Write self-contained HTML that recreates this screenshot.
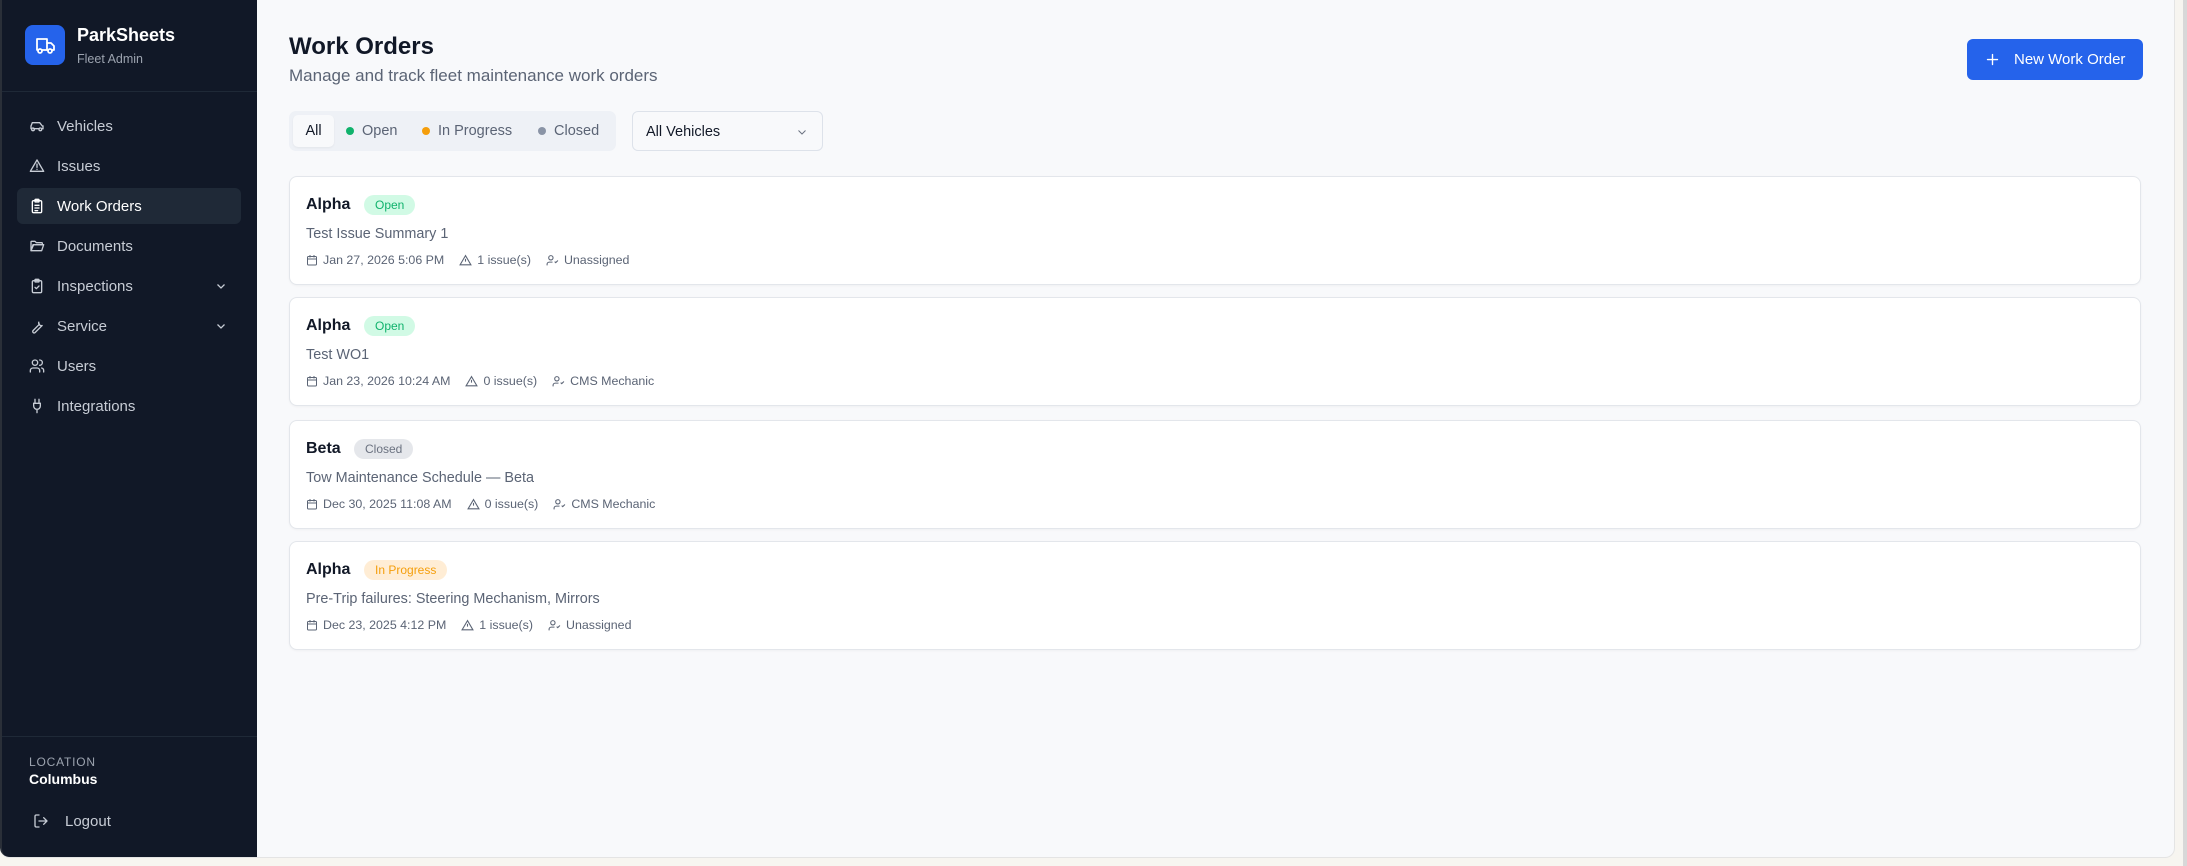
<!DOCTYPE html>
<html><head><meta charset="utf-8"><style>
*{box-sizing:border-box;margin:0;padding:0}
html,body{width:2187px;height:866px;overflow:hidden;background:#f7f5f0;font-family:"Liberation Sans",sans-serif}
.win{position:absolute;left:0;top:0;width:2175px;height:858px;background:#f8f9fb;border-radius:0 0 10px 10px;overflow:hidden;border-right:1px solid #e4e4e4;border-bottom:1px solid #e4e4e4}
.edge{position:absolute;left:2183px;top:0;width:4px;height:866px;background:#d8d8d8}
.side{position:absolute;left:0;top:0;width:257px;height:858px;background:#111827;border-left:2px solid #2a2f38;border-radius:0 0 0 10px;overflow:hidden}
.logo{position:absolute;left:23px;top:25px;width:40px;height:40px;background:#2563eb;border-radius:8px}
.brand{position:absolute;left:75px;top:25px;color:#fff;font-size:18px;font-weight:bold}
.sub{position:absolute;left:75px;top:52px;color:#9ca3af;font-size:12.5px}
.hdiv{position:absolute;left:0;top:91px;width:100%;height:1px;background:#1f2937}
.nav{position:absolute;left:15px;width:224px;height:36px;border-radius:6px;color:#c7ccd5;font-size:15px}
.nav.act{background:#1f2937;color:#fff}
.nav svg{position:absolute;left:12px;top:10px}
.nav span{position:absolute;left:40px;top:10px}
.nav .chev{left:auto;right:14px;top:12px}
.bdiv{position:absolute;left:0;top:736px;width:100%;height:1px;background:#1f2937}
.main{position:absolute;left:257px;top:0;right:0;bottom:0}
h1{position:absolute;left:32px;top:33px;font-size:24px;font-weight:bold;color:#111827}
.subt{position:absolute;left:32px;top:66px;font-size:17px;color:#5b6475}
.btn{position:absolute;left:1710px;top:39px;width:176px;height:41px;background:#2563eb;border-radius:6px;color:#fff;font-size:15px}
.btn span{position:absolute;left:47px;top:12px}
.tabs{position:absolute;left:32px;top:111px;width:327px;height:40px;background:#eef1f6;border-radius:7px;font-size:14.5px;color:#5b6475}
.tabs .all{position:absolute;left:4px;top:4px;width:41px;height:32px;background:#f8f9fb;border-radius:5px;color:#111827;text-align:center;line-height:32px;box-shadow:0 1px 2px rgba(0,0,0,.05)}
.tabs .t{position:absolute;top:12px}
.dot{position:absolute;top:16px;width:8px;height:8px;border-radius:50%}
.sel{position:absolute;left:375px;top:111px;width:191px;height:40px;border:1px solid #dde2ea;border-radius:6px;font-size:14.5px;color:#111827}
.sel span{position:absolute;left:13px;top:12px}
.card{position:absolute;left:32px;width:1852px;height:109px;background:#fff;border:1px solid #e3e6eb;border-radius:8px;box-shadow:0 1px 2px rgba(0,0,0,.04)}
.ct{position:absolute;left:16px;top:19px;font-size:16px;font-weight:bold;color:#111827}
.badge{position:absolute;top:18px;height:20px;border-radius:10px;font-size:12px;line-height:20px;padding:0 11px}
.open{background:#d1fae5;color:#10b26c}
.closed{background:#e5e7eb;color:#6b7280}
.prog{background:#ffedd5;color:#f59e0b}
.cs{position:absolute;left:16px;top:49px;font-size:14.4px;color:#5b6475}
.meta{position:absolute;left:16px;top:76px;display:flex;align-items:center;font-size:12.4px;color:#5b6475;white-space:nowrap}
.meta svg{margin-right:5px}
.meta .g{width:15px}
</style></head><body>
<div class="edge"></div>
<div class="win">
<div class="side">
 <div class="logo"><svg width="40" height="40" viewBox="0 0 40 40" fill="none" stroke="#fff" stroke-width="1.8" stroke-linecap="round" stroke-linejoin="round"><path d="M12 14h10v11H12z"/><path d="M22 18h4l3 3v4h-7"/><circle cx="15" cy="26" r="2" fill="#2563eb"/><circle cx="25" cy="26" r="2" fill="#2563eb"/></svg></div>
 <div class="brand">ParkSheets</div>
 <div class="sub">Fleet Admin</div>
 <div class="hdiv"></div>
 <div class="nav" style="top:108px"><svg width="16" height="16" viewBox="0 0 24 24" fill="none" stroke="currentColor" stroke-width="2" stroke-linecap="round"><path d="M3 16V12l2-5h11l4 5h1v4h-2M7 16h8"/><circle cx="6" cy="17" r="2"/><circle cx="17" cy="17" r="2"/></svg><span>Vehicles</span></div>
 <div class="nav" style="top:148px"><svg width="16" height="16" viewBox="0 0 24 24" fill="none" stroke="currentColor" stroke-width="2" stroke-linecap="round" stroke-linejoin="round"><path d="M12 3 2 20h20z"/><path d="M12 9v5M12 17h.01"/></svg><span>Issues</span></div>
 <div class="nav act" style="top:188px"><svg width="16" height="16" viewBox="0 0 24 24" fill="none" stroke="currentColor" stroke-width="2" stroke-linecap="round"><rect x="5" y="4" width="14" height="18" rx="2"/><rect x="9" y="2" width="6" height="4" rx="1"/><path d="M9 11h6M9 15h6M9 19h4"/></svg><span>Work Orders</span></div>
 <div class="nav" style="top:228px"><svg width="16" height="16" viewBox="0 0 24 24" fill="none" stroke="currentColor" stroke-width="2" stroke-linejoin="round"><path d="M3 6a1 1 0 0 1 1-1h5l2 2h8a1 1 0 0 1 1 1v2H7l-4 9z"/><path d="M3 19l3-9h16l-3 9z"/></svg><span>Documents</span></div>
 <div class="nav" style="top:268px"><svg width="16" height="16" viewBox="0 0 24 24" fill="none" stroke="currentColor" stroke-width="2" stroke-linecap="round" stroke-linejoin="round"><rect x="5" y="4" width="14" height="18" rx="2"/><rect x="9" y="2" width="6" height="4" rx="1"/><path d="m9 14 2 2 4-4"/></svg><span>Inspections</span><svg class="chev" width="12" height="12" viewBox="0 0 24 24" fill="none" stroke="currentColor" stroke-width="2.5"><path d="m5 9 7 7 7-7"/></svg></div>
 <div class="nav" style="top:308px"><svg width="16" height="16" viewBox="0 0 24 24" fill="none" stroke="currentColor" stroke-width="2" stroke-linejoin="round"><path d="M14.7 6.3a4 4 0 0 0 5 5l-1 1-9.5 9.5a2 2 0 0 1-3-3L15.7 9.3l-1-1a4 4 0 0 1 0-2z"/></svg><span>Service</span><svg class="chev" width="12" height="12" viewBox="0 0 24 24" fill="none" stroke="currentColor" stroke-width="2.5"><path d="m5 9 7 7 7-7"/></svg></div>
 <div class="nav" style="top:348px"><svg width="16" height="16" viewBox="0 0 24 24" fill="none" stroke="currentColor" stroke-width="2" stroke-linecap="round"><circle cx="9" cy="7" r="4"/><path d="M2 21v-2a4 4 0 0 1 4-4h6a4 4 0 0 1 4 4v2M16 3a4 4 0 0 1 0 8M22 21v-2a4 4 0 0 0-3-4"/></svg><span>Users</span></div>
 <div class="nav" style="top:388px"><svg width="16" height="16" viewBox="0 0 24 24" fill="none" stroke="currentColor" stroke-width="2" stroke-linecap="round"><path d="M12 22v-5M9 8V2M15 8V2M7 8h10v4a5 5 0 0 1-10 0z"/></svg><span>Integrations</span></div>
 <div class="bdiv"></div>
 <div style="position:absolute;left:27px;top:755px;font-size:12px;letter-spacing:.8px;color:#9ca3af">LOCATION</div>
 <div style="position:absolute;left:27px;top:771px;font-size:14px;font-weight:bold;color:#fff">Columbus</div>
 <svg style="position:absolute;left:31px;top:813px" width="16" height="16" viewBox="0 0 24 24" fill="none" stroke="#c7ccd5" stroke-width="2" stroke-linecap="round" stroke-linejoin="round"><path d="M9 21H5a2 2 0 0 1-2-2V5a2 2 0 0 1 2-2h4M16 17l5-5-5-5M21 12H9"/></svg>
 <div style="position:absolute;left:63px;top:813px;font-size:15px;color:#c7ccd5">Logout</div>
</div>
<div class="main">
 <h1>Work Orders</h1>
 <div class="subt">Manage and track fleet maintenance work orders</div>
 <div class="btn"><svg style="position:absolute;left:18px;top:13px" width="15" height="15" viewBox="0 0 24 24" fill="none" stroke="#fff" stroke-width="2.2" stroke-linecap="round"><path d="M12 4v16M4 12h16"/></svg><span>New Work Order</span></div>
 <div class="tabs">
  <div class="all">All</div>
  <div class="dot" style="left:57px;background:#10b26c"></div><div class="t" style="left:73px">Open</div>
  <div class="dot" style="left:133px;background:#f59e0b"></div><div class="t" style="left:149px">In Progress</div>
  <div class="dot" style="left:249px;background:#8a94a6"></div><div class="t" style="left:265px">Closed</div>
 </div>
 <div class="sel"><span>All Vehicles</span><svg style="position:absolute;left:163px;top:14px" width="12" height="12" viewBox="0 0 24 24" fill="none" stroke="#6b7280" stroke-width="2"><path d="m5 9 7 7 7-7"/></svg></div>

 <div class="card" style="top:176px"><div class="ct">Alpha</div><div class="badge open" style="left:74px">Open</div><div class="cs">Test Issue Summary 1</div>
  <div class="meta"><svg width="12" height="12" viewBox="0 0 24 24" fill="none" stroke="currentColor" stroke-width="2"><rect x="3" y="5" width="18" height="17" rx="2"/><path d="M3 10h18M8 2v5M16 2v5"/></svg>Jan 27, 2026 5:06 PM<i class="g"></i><svg width="13" height="13" viewBox="0 0 24 24" fill="none" stroke="currentColor" stroke-width="2"><path d="M12 3 2 20h20z"/><path d="M12 9v5M12 17h.01"/></svg>1 issue(s)<i class="g"></i><svg width="13" height="13" viewBox="0 0 24 24" fill="none" stroke="currentColor" stroke-width="2"><circle cx="9" cy="7" r="4"/><path d="M2 21v-2a4 4 0 0 1 4-4h6M16 14l2 2 4-4"/></svg>Unassigned</div></div>

 <div class="card" style="top:297px"><div class="ct">Alpha</div><div class="badge open" style="left:74px">Open</div><div class="cs">Test WO1</div>
  <div class="meta"><svg width="12" height="12" viewBox="0 0 24 24" fill="none" stroke="currentColor" stroke-width="2"><rect x="3" y="5" width="18" height="17" rx="2"/><path d="M3 10h18M8 2v5M16 2v5"/></svg>Jan 23, 2026 10:24 AM<i class="g"></i><svg width="13" height="13" viewBox="0 0 24 24" fill="none" stroke="currentColor" stroke-width="2"><path d="M12 3 2 20h20z"/><path d="M12 9v5M12 17h.01"/></svg>0 issue(s)<i class="g"></i><svg width="13" height="13" viewBox="0 0 24 24" fill="none" stroke="currentColor" stroke-width="2"><circle cx="9" cy="7" r="4"/><path d="M2 21v-2a4 4 0 0 1 4-4h6M16 14l2 2 4-4"/></svg>CMS Mechanic</div></div>

 <div class="card" style="top:420px"><div class="ct">Beta</div><div class="badge closed" style="left:64px">Closed</div><div class="cs">Tow Maintenance Schedule — Beta</div>
  <div class="meta"><svg width="12" height="12" viewBox="0 0 24 24" fill="none" stroke="currentColor" stroke-width="2"><rect x="3" y="5" width="18" height="17" rx="2"/><path d="M3 10h18M8 2v5M16 2v5"/></svg>Dec 30, 2025 11:08 AM<i class="g"></i><svg width="13" height="13" viewBox="0 0 24 24" fill="none" stroke="currentColor" stroke-width="2"><path d="M12 3 2 20h20z"/><path d="M12 9v5M12 17h.01"/></svg>0 issue(s)<i class="g"></i><svg width="13" height="13" viewBox="0 0 24 24" fill="none" stroke="currentColor" stroke-width="2"><circle cx="9" cy="7" r="4"/><path d="M2 21v-2a4 4 0 0 1 4-4h6M16 14l2 2 4-4"/></svg>CMS Mechanic</div></div>

 <div class="card" style="top:541px"><div class="ct">Alpha</div><div class="badge prog" style="left:74px">In Progress</div><div class="cs">Pre-Trip failures: Steering Mechanism, Mirrors</div>
  <div class="meta"><svg width="12" height="12" viewBox="0 0 24 24" fill="none" stroke="currentColor" stroke-width="2"><rect x="3" y="5" width="18" height="17" rx="2"/><path d="M3 10h18M8 2v5M16 2v5"/></svg>Dec 23, 2025 4:12 PM<i class="g"></i><svg width="13" height="13" viewBox="0 0 24 24" fill="none" stroke="currentColor" stroke-width="2"><path d="M12 3 2 20h20z"/><path d="M12 9v5M12 17h.01"/></svg>1 issue(s)<i class="g"></i><svg width="13" height="13" viewBox="0 0 24 24" fill="none" stroke="currentColor" stroke-width="2"><circle cx="9" cy="7" r="4"/><path d="M2 21v-2a4 4 0 0 1 4-4h6M16 14l2 2 4-4"/></svg>Unassigned</div></div>
</div>
</div>
</body></html>
